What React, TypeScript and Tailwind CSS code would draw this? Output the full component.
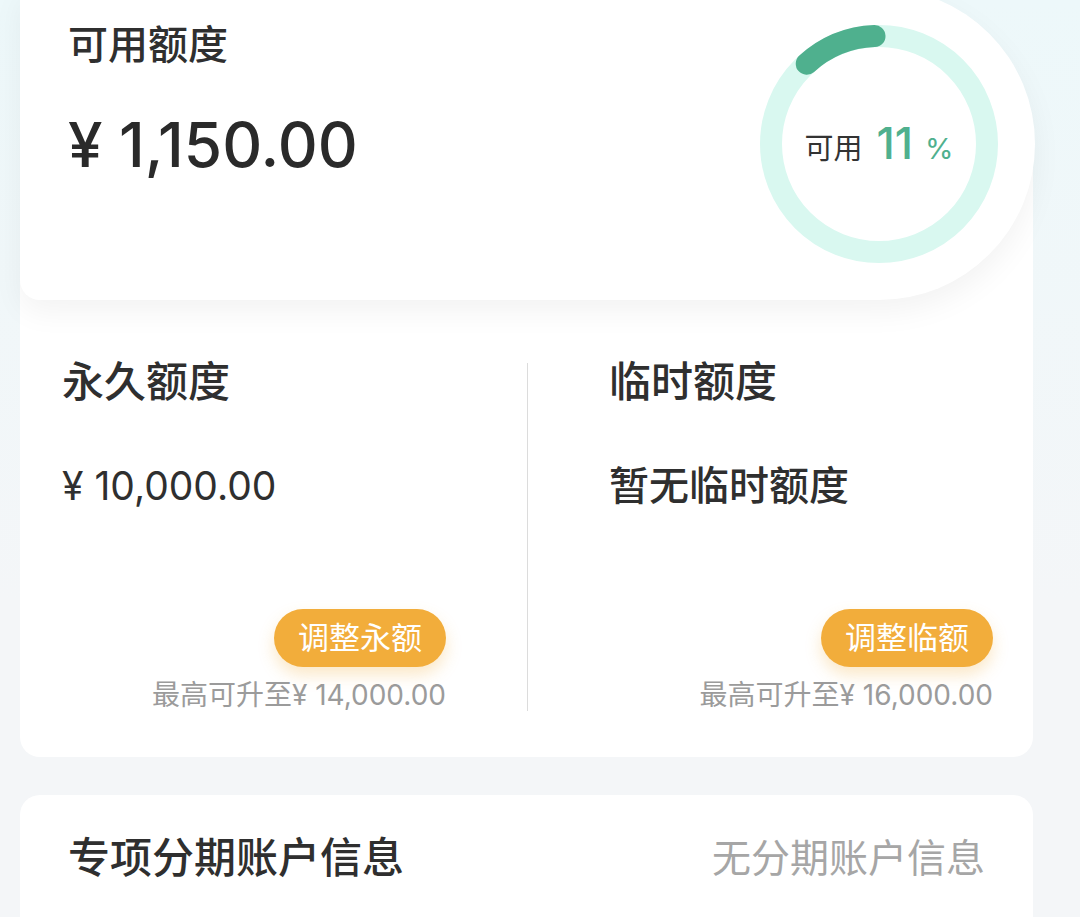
import React from "react";

const ring = { size: 240, r: 108, stroke: 22, pct: 0.11 };

function UsageRing() {
  const c = 2 * Math.PI * ring.r;
  const len = c * ring.pct;
  return (
    <div className="relative flex h-[312px] w-[312px] shrink-0 items-center justify-center">
      <svg width={ring.size} height={ring.size} viewBox="0 0 240 240" className="absolute">
        <circle cx="120" cy="120" r={ring.r} fill="none" stroke="#d9f8f0" strokeWidth={ring.stroke} />
        <circle
          cx="120"
          cy="120"
          r={ring.r}
          fill="none"
          stroke="#4fb08e"
          strokeWidth={ring.stroke}
          strokeLinecap="round"
          strokeDasharray={`${len} ${c}`}
          transform="rotate(-132 120 120)"
        />
      </svg>
      <div className="relative flex items-baseline pt-[4px]">
        <span className="text-[29px] text-[#333]">可用</span>
        <span className="ml-[14px] text-[44px] font-medium leading-none text-[#4fb08e]">11</span>
        <span className="ml-[12px] text-[29px] text-[#4fb08e]">%</span>
      </div>
    </div>
  );
}

function QuotaColumn({ title, value, big, button, limit }: { title: string; value: string; big?: boolean; button: string; limit: string }) {
  return (
    <div className="flex flex-col">
      <div className="text-[42px] font-medium leading-[50px] text-[#2f2f2f]">{title}</div>
      <div className={`mt-[55px] leading-[47px] text-[#2f2f2f] ${big ? "text-[40px] font-medium" : "text-[39px]"}`}>{value}</div>
      <div className="flex-1" />
      <div className="flex justify-end">
        <button className="flex h-[58px] w-[172px] items-center justify-center rounded-full bg-[#f2ad3b] text-[31px] text-white shadow-[0_8px_16px_rgba(242,173,59,0.28)]">
          {button}
        </button>
      </div>
      <div className="mt-[12px] text-right text-[28px] leading-[32px] text-[#9b9b9b]">{limit}</div>
    </div>
  );
}

export default function App() {
  return (
    <div className="h-[917px] overflow-hidden bg-[linear-gradient(180deg,#edf8fa_0px,#f4f6f8_600px)] px-5 font-[Inter,'Noto_Sans_CJK_SC',sans-serif]">
      {/* 可用额度 */}
      <div className="relative z-10 -mt-[12px] flex h-[312px] w-[1015px] justify-between rounded-[0_156px_156px_20px] bg-white shadow-[0_12px_30px_rgba(0,0,0,0.05)]">
        <div className="pl-[48px] pt-[32px]">
          <div className="text-[40px] font-medium leading-[50px] text-[#2f2f2f]">可用额度</div>
          <div className="mt-[38px] text-[62px] font-medium leading-[74px] text-[#2a2a2a]">¥ 1,150.00</div>
        </div>
        <UsageRing />
      </div>

      {/* 永久 / 临时 */}
      <div className="-mt-[156px] w-[1013px] rounded-[20px] bg-white pb-[46px] pl-[42px] pr-[40px] pt-[213px]">
        <div className="grid h-[354px] grid-cols-[384px_1px_384px] gap-x-[81px]">
          <QuotaColumn title="永久额度" value="¥ 10,000.00" button="调整永额" limit="最高可升至¥ 14,000.00" />
          <div className="mt-[6px] bg-[#dcdcdc]" />
          <QuotaColumn title="临时额度" value="暂无临时额度" big button="调整临额" limit="最高可升至¥ 16,000.00" />
        </div>
      </div>

      {/* 专项分期 */}
      <div className="mt-[38px] flex h-[122px] w-[1013px] items-start justify-between rounded-t-[20px] bg-white px-[48px] pt-[38px]">
        <div className="text-[42px] font-medium leading-[50px] text-[#2f2f2f]">专项分期账户信息</div>
        <div className="text-[39px] leading-[50px] text-[#a6a6a6]">无分期账户信息</div>
      </div>
    </div>
  );
}
